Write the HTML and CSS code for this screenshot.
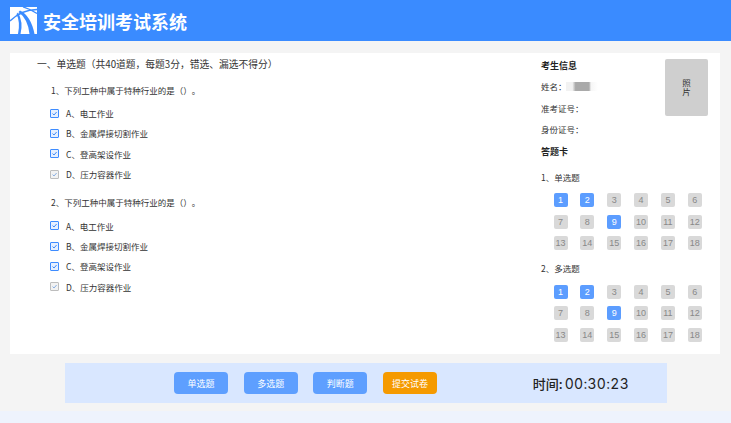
FILE: index.html
```html
<!DOCTYPE html>
<html lang="zh-CN">
<head>
<meta charset="utf-8">
<title>安全培训考试系统</title>
<link rel="stylesheet" href="styles.css">
</head>
<body>
<svg class="defs" width="0" height="0" aria-hidden="true"><symbol id="chk" viewBox="0 0 9 9"><path d="M2 4.6 3.9 6.4 7.2 2.6" fill="none" stroke="currentColor" stroke-width="1.2"/></symbol></svg>
<header class="top">
  <svg class="logo" viewBox="0 0 27 27" aria-hidden="true">
    <rect width="27" height="27" fill="#fff"/>
    <path fill="#3a8bff" d="M10 3.5Q21 9 24.5 27H19.5Q18 12 8.5 5Z"/>
    <path fill="#3a8bff" d="M8 5.5Q13.5 15 10.5 27H8Q10.5 15 6.5 7Z"/>
    <path fill="none" stroke="#3a8bff" stroke-width="1.3" d="M27 2.5Q12 2.5 0 14M13 0Q20 2 27 6.5"/>
  </svg>
  <h1 class="brand">安全培训考试系统</h1>
</header>
<main class="sheet">
  <section class="paper">
    <h2 class="sec">一、单选题（共40道题，每题3分，错选、漏选不得分）</h2>
    <div class="q">
      <p class="qt">1、下列工种中属于特种行业的是（）。</p>
      <label class="opt"><svg class="cb"><use href="#chk"/></svg>A、电工作业</label>
      <label class="opt"><svg class="cb"><use href="#chk"/></svg>B、金属焊接切割作业</label>
      <label class="opt"><svg class="cb"><use href="#chk"/></svg>C、登高架设作业</label>
      <label class="opt"><svg class="cb off"><use href="#chk"/></svg>D、压力容器作业</label>
    </div>
    <div class="q">
      <p class="qt">2、下列工种中属于特种行业的是（）。</p>
      <label class="opt"><svg class="cb"><use href="#chk"/></svg>A、电工作业</label>
      <label class="opt"><svg class="cb"><use href="#chk"/></svg>B、金属焊接切割作业</label>
      <label class="opt"><svg class="cb"><use href="#chk"/></svg>C、登高架设作业</label>
      <label class="opt"><svg class="cb off"><use href="#chk"/></svg>D、压力容器作业</label>
    </div>
  </section>
  <aside class="side">
    <div class="info">
      <div class="fields">
        <h3 class="ttl">考生信息</h3>
        <p class="fld">姓名：<span class="mask"></span></p>
        <p class="fld">准考证号：</p>
        <p class="fld">身份证号：</p>
      </div>
      <div class="photo"><span>照片</span></div>
    </div>
    <h3 class="ttl card">答题卡</h3>
    <p class="grp">1、单选题</p>
    <div class="grid">
      <span class="n on">1</span><span class="n on">2</span><span class="n">3</span><span class="n">4</span><span class="n">5</span><span class="n">6</span>
      <span class="n">7</span><span class="n">8</span><span class="n on">9</span><span class="n">10</span><span class="n">11</span><span class="n">12</span>
      <span class="n">13</span><span class="n">14</span><span class="n">15</span><span class="n">16</span><span class="n">17</span><span class="n">18</span>
    </div>
    <p class="grp two">2、多选题</p>
    <div class="grid">
      <span class="n on">1</span><span class="n on">2</span><span class="n">3</span><span class="n">4</span><span class="n">5</span><span class="n">6</span>
      <span class="n">7</span><span class="n">8</span><span class="n on">9</span><span class="n">10</span><span class="n">11</span><span class="n">12</span>
      <span class="n">13</span><span class="n">14</span><span class="n">15</span><span class="n">16</span><span class="n">17</span><span class="n">18</span>
    </div>
  </aside>
</main>
<footer class="bar">
  <button class="btn">单选题</button>
  <button class="btn">多选题</button>
  <button class="btn">判断题</button>
  <button class="btn sub">提交试卷</button>
  <div class="timer">时间:<span class="dig">00:30:23</span></div>
</footer>
<div class="strip"></div>
</body>
</html>
```
FILE: styles.css
```css
* { box-sizing: border-box; }
html, body { margin: 0; padding: 0; }
body {
  width: 731px;
  height: 423px;
  overflow: hidden;
  background: #f4f4f4;
  font-family: "Noto Sans CJK SC", "Liberation Sans", sans-serif;
  color: #333;
  display: flex;
  flex-direction: column;
}
.defs { position: absolute; }
p, h1, h2, h3 { margin: 0; font-weight: 400; }

.top {
  height: 41px;
  background: #3a8bff;
  display: flex;
  align-items: center;
  gap: 6px;
  padding: 0 0 0 10px;
  flex: none;
}
.logo { width: 27px; height: 27px; }
.brand { font-size: 18px; line-height: 24px; font-weight: 700; color: #fff; }

.sheet {
  flex: none;
  width: 710px;
  height: 301px;
  margin: 12px 0 0 10px;
  background: #fff;
  display: flex;
}
.paper { width: 531px; padding: 4px 0 0 27px; }
.sec { font-size: 9.75px; line-height: 14px; color: #333; }
.q { padding-left: 14px; }
.qt { font-size: 8.5px; line-height: 12px; margin: 13px 0 7px; text-spacing-trim: space-all; }
.q + .q .qt { margin-top: 11.5px; margin-bottom: 8px; }
.opt {
  display: flex;
  align-items: center;
  gap: 7px;
  height: 20.3px;
  font-size: 8.5px;
  color: #333;
  margin-left: -1px;
}
.cb {
  width: 9px;
  height: 9px;
  flex: none;
  border: 1px solid #3e8cff;
  border-radius: 1px;
  background: #e6f0ff;
  color: #2f80f5;
}
.cb.off { border-color: #bdbdbd; background: #f2f2f2; color: #7fa8e0; }

.side { flex: 1; padding: 5px 0 0 0; }
.info { display: flex; justify-content: space-between; width: 167px; }
.fields { padding-top: 1px; }
.ttl { font-size: 9px; line-height: 13px; font-weight: 700; color: #222; }
.fld { font-size: 8.5px; line-height: 12px; margin-top: 9.5px; display: flex; align-items: center; color: #333; }
.ttl + .fld { margin-top: 8px; }
.mask {
  width: 32px;
  height: 9px;
  margin-left: -1px;
  background: linear-gradient(90deg, #f2f2f2 0 20%, #aaa 30% 72%, #f6f6f6 78%, #fff 100%);
}
.photo {
  width: 43px;
  height: 57px;
  margin-top: 1px;
  padding-bottom: 2px;
  background: #cfcfcf;
  border-radius: 2px;
  display: flex;
  align-items: center;
  justify-content: center;
  font-size: 8.5px;
  line-height: 8.5px;
  color: #333;
}
.photo span { width: 9px; text-align: center; }
.card { margin-top: 10px; }
.grp { font-size: 8.5px; line-height: 12px; margin: 12.5px 0 0; color: #333; }
.grp.two { margin-top: 12px; }
.grid {
  display: grid;
  grid-template-columns: repeat(6, 14px);
  grid-auto-rows: 14px;
  column-gap: 12.87px;
  row-gap: 7.6px;
  margin: 10.5px 0 0 12.5px;
}
.n {
  background: #d9d9d9;
  color: #888;
  border-radius: 2px;
  font-size: 9px;
  line-height: 14px;
  text-align: center;
  font-family: "Liberation Sans", sans-serif;
}
.n.on { background: #5c9dff; color: #fff; }

.bar {
  flex: none;
  width: 602px;
  height: 40px;
  margin: 9px 0 0 65px;
  background: #d9e7ff;
  display: flex;
  align-items: center;
  gap: 15.7px;
  padding-left: 109px;
}
.btn {
  width: 54px;
  height: 22px;
  padding: 0;
  border: 0;
  border-radius: 4px;
  background: #5e9fff;
  color: #fff;
  font: 9px "Noto Sans CJK SC", sans-serif;
}
.btn.sub { background: #f59a00; }
.timer {
  margin-left: 80px;
  font-size: 13px;
  color: #222;
  display: flex;
  align-items: center;
  font-weight: 500;
}
.dig { font-family: "Inter", sans-serif; font-feature-settings: "tnum"; font-size: 14px; font-weight: 400; letter-spacing: 0.3px; margin-left: 2px; }
.strip { flex: none; height: 12px; margin-top: 8px; background: #eef3fd; }
```
